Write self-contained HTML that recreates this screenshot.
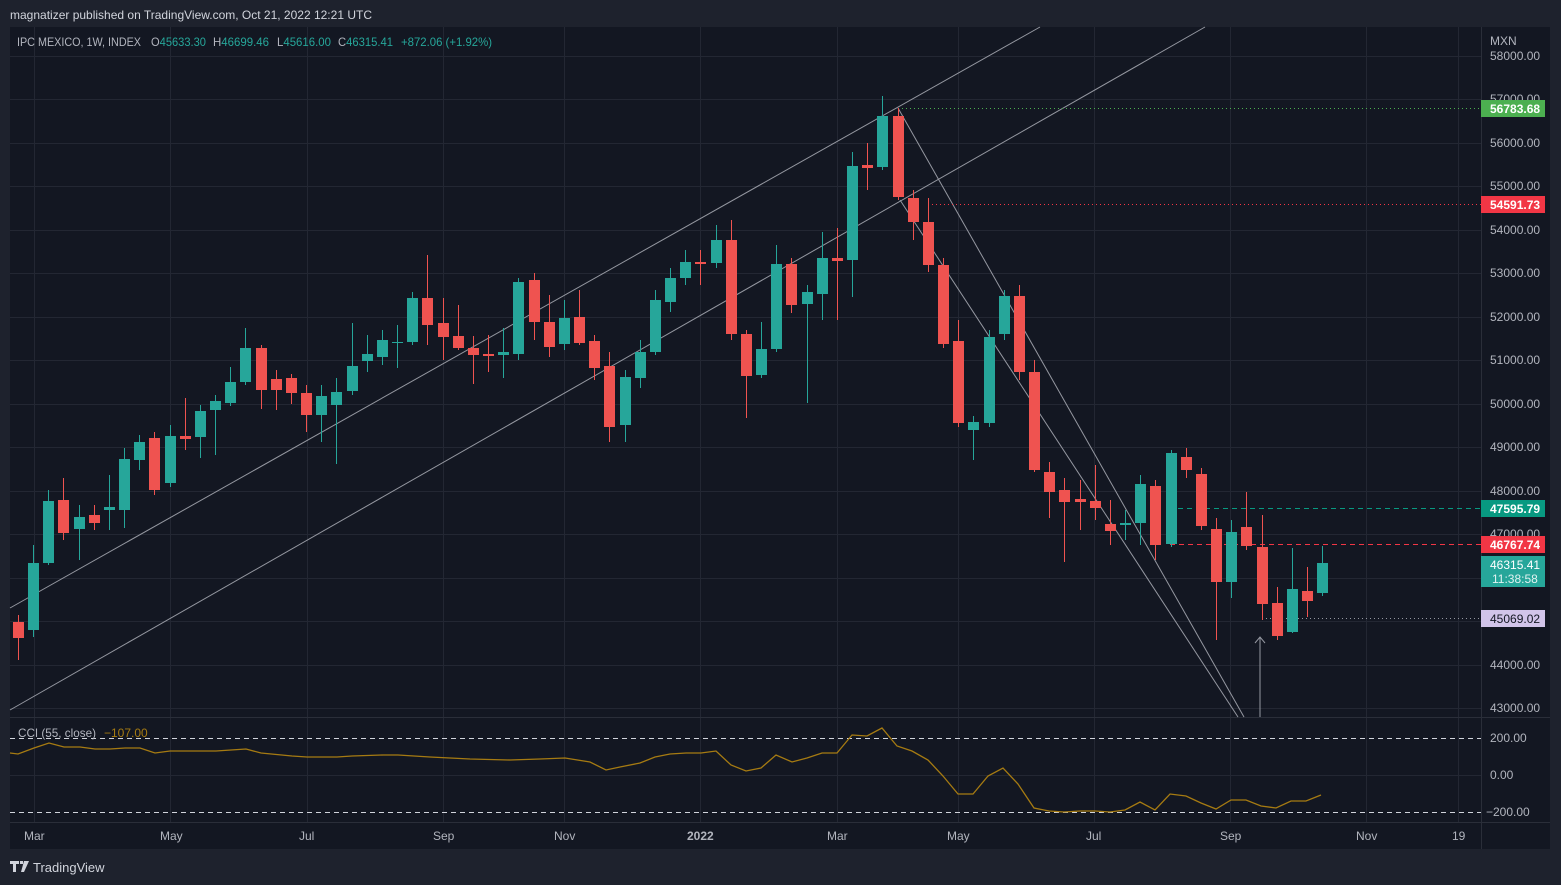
<!DOCTYPE html>
<html><head><meta charset="utf-8"><style>
html,body{margin:0;padding:0;background:#1e222d;width:1561px;height:885px;overflow:hidden;font-family:"Liberation Sans",sans-serif}
svg{position:absolute;left:0;top:0}
text{font-family:"Liberation Sans",sans-serif}
</style></head><body>
<svg width="1561" height="885" id="s">
<rect x="0" y="0" width="1561" height="885" fill="#1e222d"/>
<text x="10" y="19" fill="#d1d4dc" font-size="12">magnatizer published on TradingView.com, Oct 21, 2022 12:21 UTC</text>
<rect x="10" y="27" width="1540" height="822" fill="#131722"/>
<g id="grid" stroke="#232733" stroke-width="1"></g>
<g fill="#b2b5be" font-size="12" id="axis"></g>
<line x1="1481.5" y1="27" x2="1481.5" y2="849" stroke="#2a2e39"/>
<line x1="10" y1="717.5" x2="1550" y2="717.5" stroke="#2a2e39"/>
<line x1="10" y1="822.5" x2="1550" y2="822.5" stroke="#2a2e39"/>
<g stroke="#9598a1" stroke-width="1" fill="none">
<line x1="10" y1="608" x2="1040" y2="27"/>
<line x1="10" y1="710" x2="1205" y2="27"/>
<line x1="898" y1="108" x2="1244" y2="717"/>
<line x1="900" y1="200" x2="1238" y2="717"/>
<line x1="1260" y1="717" x2="1260" y2="637"/>
<polyline points="1255,643 1260,637 1265,643"/>
</g>
<g stroke-width="1">
<line x1="898" y1="108.5" x2="1481" y2="108.5" stroke="#4caf50" stroke-dasharray="1,3"/>
<line x1="928" y1="204.5" x2="1481" y2="204.5" stroke="#f23645" stroke-dasharray="1,3"/>
<line x1="1178" y1="508.5" x2="1481" y2="508.5" stroke="#089981" stroke-dasharray="5,4"/>
<line x1="1170" y1="544.5" x2="1481" y2="544.5" stroke="#f23645" stroke-dasharray="5,4"/>
<line x1="1262" y1="618.5" x2="1481" y2="618.5" stroke="#9598a1" stroke-dasharray="1,3"/>
</g>
<g id="candles"></g>
<line x1="10" y1="738.5" x2="1481" y2="738.5" stroke="#d1d4dc" stroke-dasharray="5,4"/>
<line x1="10" y1="812.5" x2="1481" y2="812.5" stroke="#d1d4dc" stroke-dasharray="5,4"/>
<polyline fill="none" stroke="#a67b12" stroke-width="1.3" points="10,753 18,754 34,748 49,743 64,747 80,747 95,749 110,749 125,748 140,748 155,753 170,751 186,751 216,751 246,749 261,753 292,756 307,757 337,757 352,756 383,755 398,755 430,757 470,759 510,760 540,759 565,758 590,762 606,770 620,767 640,763 655,757 670,754 686,753 701,753 716,751 731,765 746,771 761,768 776,755 792,762 807,758 822,753 837,753 852,735 867,736 882,728 897,746 912,751 928,760 943,776 958,794 973,794 988,776 1003,768 1018,784 1034,808 1049,811 1064,812 1080,811 1095,811 1110,812 1125,810 1140,802 1155,810 1170,794 1186,796 1201,803 1216,809 1231,800 1246,800 1261,806 1276,808 1291,801 1306,801 1321,795"/>
<text x="18" y="737" fill="#b2b5be" font-size="12" textLength="78" lengthAdjust="spacingAndGlyphs">CCI (55, close)</text>
<text x="104" y="737" fill="#a67b12" font-size="12">−107.00</text>
<text x="1490" y="742" fill="#b2b5be" font-size="12">200.00</text>
<text x="1490" y="779" fill="#b2b5be" font-size="12">0.00</text>
<text x="1486" y="816" fill="#b2b5be" font-size="12">−200.00</text>
<g font-size="12" fill="#b2b5be">
<text x="17" y="46" textLength="124" lengthAdjust="spacingAndGlyphs">IPC MEXICO, 1W, INDEX</text>
<text x="151" y="46" textLength="55" lengthAdjust="spacingAndGlyphs">O<tspan fill="#26a69a">45633.30</tspan></text>
<text x="213" y="46" textLength="56" lengthAdjust="spacingAndGlyphs">H<tspan fill="#26a69a">46699.46</tspan></text>
<text x="277" y="46" textLength="54" lengthAdjust="spacingAndGlyphs">L<tspan fill="#26a69a">45616.00</tspan></text>
<text x="338" y="46" textLength="55" lengthAdjust="spacingAndGlyphs">C<tspan fill="#26a69a">46315.41</tspan></text>
<text x="401" y="46" fill="#26a69a" textLength="91" lengthAdjust="spacingAndGlyphs">+872.06 (+1.92%)</text>
</g>
<text x="1490" y="45" fill="#b2b5be" font-size="12">MXN</text>
<rect x="1481" y="100" width="64" height="17" fill="#4caf50"/><text x="1490" y="113" fill="#fff" font-size="12" font-weight="bold">56783.68</text>
<rect x="1481" y="196" width="64" height="17" fill="#f23645"/><text x="1490" y="209" fill="#fff" font-size="12" font-weight="bold">54591.73</text>
<rect x="1481" y="500" width="64" height="17" fill="#089981"/><text x="1490" y="513" fill="#fff" font-size="12" font-weight="bold">47595.79</text>
<rect x="1481" y="536" width="64" height="17" fill="#f23645"/><text x="1490" y="549" fill="#fff" font-size="12" font-weight="bold">46767.74</text>
<rect x="1481" y="556" width="64" height="31" fill="#26a69a"/><text x="1490" y="569" fill="#fff" font-size="12">46315.41</text><text x="1492" y="583" fill="#e0f2f1" font-size="12">11:38:58</text>
<rect x="1481" y="610" width="64" height="17" fill="#d1c4e9"/><text x="1490" y="623" fill="#131722" font-size="12">45069.02</text>
<g fill="#b2b5be" font-size="12">
<text x="24" y="840">Mar</text><text x="160" y="840">May</text><text x="299" y="840">Jul</text><text x="433" y="840">Sep</text><text x="554" y="840">Nov</text><text x="687" y="840" font-weight="bold">2022</text><text x="827" y="840">Mar</text><text x="947" y="840">May</text><text x="1086" y="840">Jul</text><text x="1220" y="840">Sep</text><text x="1356" y="840">Nov</text><text x="1452" y="840">19</text>
</g>
<g fill="#d1d4dc">
<path d="M10 861h9v3h-3v8h-3v-8h-3z M20 861h3v3h-3z M24 861h5l-5 11h-3z"/>
</g>
<text x="33" y="872" fill="#d1d4dc" font-size="13">TradingView</text>
</svg>
<script>
var NS="http://www.w3.org/2000/svg";
function el(t,a,p){var e=document.createElementNS(NS,t);for(var k in a)e.setAttribute(k,a[k]);p.appendChild(e);return e;}
var grid=document.getElementById('grid'),axis=document.getElementById('axis');
[34,170,307,443,564,700,837,958,1094,1230,1366,1458].forEach(function(x){el('line',{x1:x+.5,y1:27,x2:x+.5,y2:822},grid);});
for(var p=43000;p<=58000;p+=1000){var y=Math.round(708-(p-43000)*0.043467);el('line',{x1:10,y1:y+.5,x2:1481,y2:y+.5},grid);
var t=el('text',{x:1490,y:y+4},axis);t.textContent=p.toFixed(2);}
el('line',{x1:10,y1:775.5,x2:1481,y2:775.5},grid);
var C=[['r',622,638,615,660],['g',563,630,545,637],['g',501,563,490,565],['r',500,533,478,540],['g',517,529,505,560],['r',515,523,505,530],['g',507,510,475,530],['g',459,510,448,528],['g',442,460,435,470],['r',438,490,432,495],['g',436,483,425,487],['r',436,439,398,450],['g',411,437,405,458],['g',401,410,395,455],['g',382,403,367,406],['g',348,382,328,385],['r',348,390,345,409],['r',379,390,370,410],['r',378,393,374,404],['r',393,415,385,432],['g',396,415,385,442],['g',392,405,378,464],['g',366,391,323,395],['g',354,361,335,372],['g',340,357,330,365],['g',342,343,325,368],['g',298,342,292,345],['r',298,325,255,345],['r',323,337,298,360],['r',336,348,305,350],['r',348,355,336,384],['r',354,356,335,372],['g',352,355,328,378],['g',282,354,278,360],['r',280,322,273,340],['r',322,347,295,357],['g',318,344,300,350],['r',317,343,290,345],['r',341,368,335,380],['r',366,427,352,442],['g',377,425,370,442],['g',352,378,340,388],['g',300,352,290,355],['g',278,302,268,312],['g',262,278,250,285],['r',262,264,250,285],['g',240,263,225,268],['r',240,334,220,340],['r',334,376,330,418],['g',349,375,322,378],['g',264,349,245,352],['r',264,305,258,313],['g',292,304,285,403],['g',258,294,232,320],['r',258,261,228,320],['g',166,260,152,297],['r',165,168,143,190],['g',116,167,96,170],['r',116,197,108,200],['r',198,222,190,240],['r',222,265,198,272],['r',265,344,258,348],['r',341,423,320,427],['g',422,430,416,460],['g',337,423,330,427],['g',296,334,290,340],['r',296,372,285,380],['r',372,470,360,472],['r',472,492,462,518],['r',490,502,478,562],['r',499,502,480,530],['r',501,508,465,520],['r',524,531,500,545],['g',523,525,510,540],['g',484,523,475,545],['r',486,545,480,560],['g',453,544,450,547],['r',457,470,448,478],['r',474,526,468,530],['r',529,582,518,640],['g',532,582,520,598],['r',527,546,492,550],['r',547,604,515,620],['r',603,636,587,640],['g',589,632,548,633],['r',591,601,567,617],['g',563,593,546,596]];
var cg=document.getElementById('candles');
C.forEach(function(c,i){var x=Math.round(18+i*15.165);var col=c[0]=='g'?'#26a69a':'#ef5350';
el('line',{x1:x+.5,y1:c[3],x2:x+.5,y2:c[4],stroke:col},cg);
el('rect',{x:x-5,y:c[1],width:11,height:Math.max(1,c[2]-c[1]),fill:col},cg);});
</script>
</body></html>
